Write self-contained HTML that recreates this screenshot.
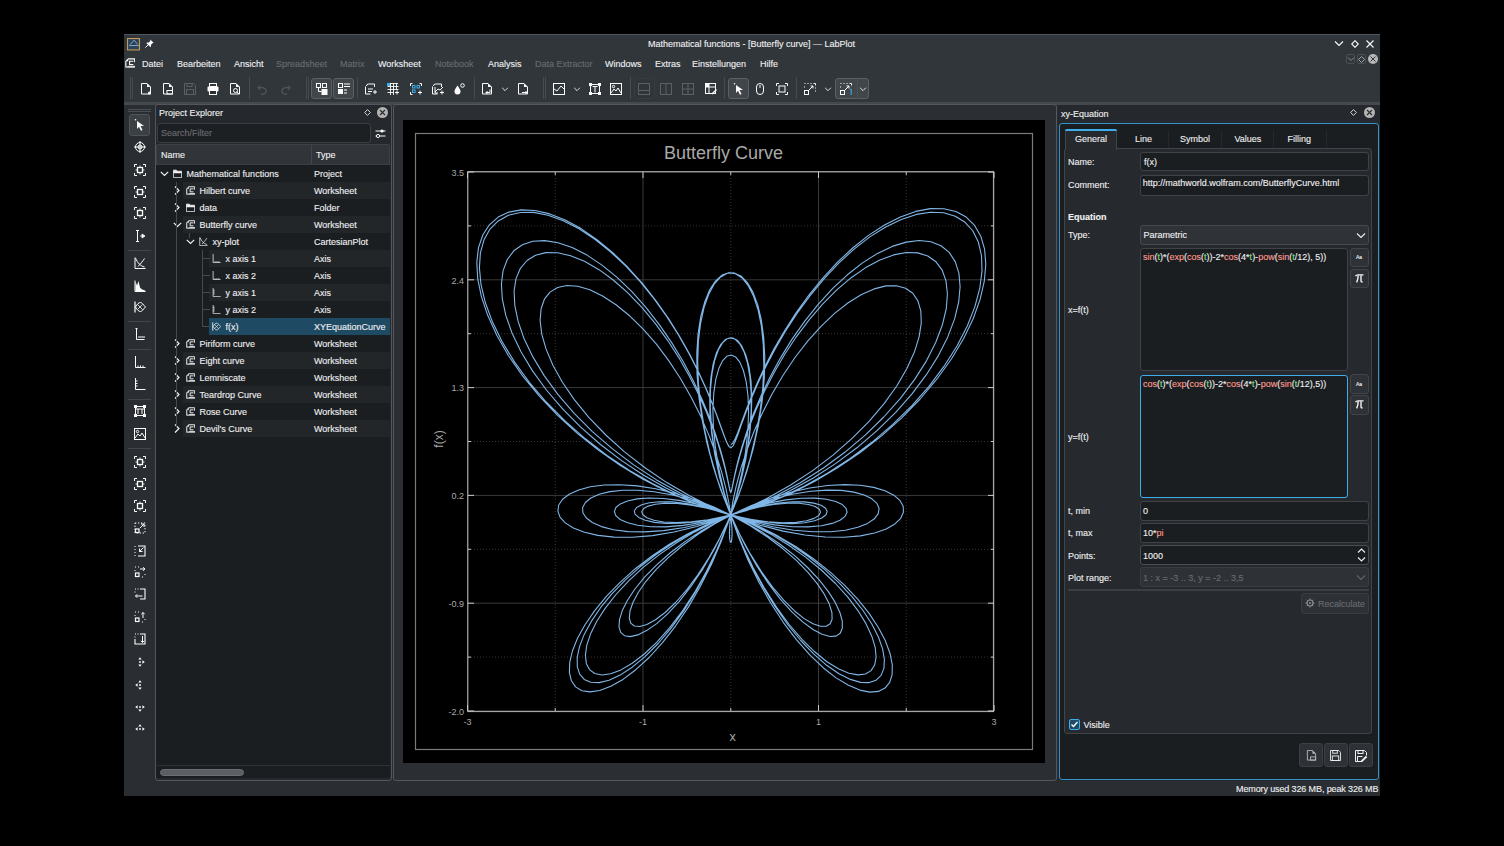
<!DOCTYPE html>
<html><head><meta charset="utf-8">
<style>
*{box-sizing:border-box;margin:0;padding:0}
html,body{width:1504px;height:846px;overflow:hidden;background:#000;font-family:"Liberation Sans",sans-serif;color:#eff0f1}
.a{position:absolute}
.t{position:absolute;white-space:nowrap;font-size:9px;line-height:12px;-webkit-text-stroke:0.12px currentColor}
.dis{color:#686c70}
.sep{position:absolute;width:1px;background:#464b50}
.tb{position:absolute;background:#41464b;border:1px solid #5b6065;border-radius:3px}
.row{position:absolute;height:17px;background:#232629}
.fld{position:absolute;background:#1b1e21;border:1px solid #3f4348;border-radius:3px}
.btn{position:absolute;background:#2e3237;border:1px solid #40454a;border-radius:3px}
.lbl{position:absolute;white-space:nowrap;font-size:9px;line-height:12px;left:1068px;-webkit-text-stroke:0.12px currentColor}
.pl{position:absolute;white-space:nowrap;font-size:9px;line-height:12px;color:#a9a9a9}
.fn{color:#ff9a8e}
.tv{color:#7ee07e}
</style></head><body>
<div id="win" class="a" style="left:124px;top:34px;width:1256px;height:762px;background:#2a2e32;border-top:1px solid #505760"></div>
<div class="a" style="left:124px;top:35px;width:1256px;height:67px;background:#31363b"></div>

<!-- TITLE BAR -->
<svg class="a" style="left:127.0px;top:37.5px" width="13" height="13" viewBox="0 0 12 12"><rect x="0.5" y="0.5" width="11" height="10.5" fill="#2c4257" stroke="#c59a5a"/><path d="M2 7h9M3 6l3.5-4 3.5 4" fill="none" stroke="#8fb8e6" stroke-width="0.8"/></svg>
<svg class="a" style="left:145.0px;top:39.0px" width="9" height="9" viewBox="0 0 12 12"><path d="M7 0.5l4.5 4.5-1.5 0.5-2 2 0 2.5-1 0.5-5-5 0.5-1h2.5l2-2z" fill="#fcfcfc"/><path d="M0.5 11.5l3.5-3.5" stroke="#fcfcfc" stroke-width="1.3"/></svg>
<div class="t" style="left:648px;top:38px">Mathematical functions - [Butterfly curve] — LabPlot</div>
<svg class="a" style="left:1334px;top:40px" width="10" height="7"><path d="M1 1.5l4 4 4-4" fill="none" stroke="#fcfcfc" stroke-width="1.1"/></svg>
<svg class="a" style="left:1350.5px;top:39.5px" width="8" height="8"><path d="M4 0.7L7.3 4 4 7.3 0.7 4z" fill="none" stroke="#fcfcfc" stroke-width="1.1"/></svg>
<svg class="a" style="left:1366px;top:40px" width="8" height="8"><path d="M0.5 0.5l7 7M7.5 0.5l-7 7" stroke="#fcfcfc" stroke-width="1.1"/></svg>
<div class="a" style="left:1346px;top:54px;width:9px;height:10px;border:1px solid #4a4f54;border-radius:2px"></div>
<svg class="a" style="left:1347px;top:56px" width="8" height="6"><path d="M1 1.5l3 3 3-3" fill="none" stroke="#8a8e92"/></svg>
<div class="a" style="left:1357px;top:54px;width:9px;height:10px;border:1px solid #4a4f54;border-radius:2px"></div>
<svg class="a" style="left:1358px;top:56px" width="7" height="7"><path d="M3.5 0.5l3 3-3 3-3-3z" fill="none" stroke="#a0a4a8"/></svg>
<div class="a" style="left:1368px;top:54px;width:10px;height:10px;border-radius:50%;background:#b8b8b8"></div>
<svg class="a" style="left:1370px;top:56px" width="6" height="6"><path d="M0.5 0.5l5 5M5.5 0.5l-5 5" stroke="#333" stroke-width="1"/></svg>

<!-- MENU BAR -->
<svg class="a" style="left:124.5px;top:58.0px" width="10" height="10" viewBox="0 0 12 12"><path d="M1 3.5V11.5M3.5 1H11.5V5" fill="none" stroke="#fcfcfc" stroke-width="1.3"/><path d="M0.3 3.8L3.8 0.3V3.8z" fill="#fcfcfc"/><path d="M10 3.8H5.5V7.8H10" fill="none" stroke="#fcfcfc" stroke-width="1.3"/><path d="M4 9.3h8v2.5H1.5V10H4z" fill="#fcfcfc" opacity="0.85"/></svg>
<div class="t" style="left:142px;top:58px">Datei</div>
<div class="t" style="left:177px;top:58px">Bearbeiten</div>
<div class="t" style="left:234px;top:58px">Ansicht</div>
<div class="t dis" style="left:276px;top:58px">Spreadsheet</div>
<div class="t dis" style="left:340px;top:58px">Matrix</div>
<div class="t" style="left:378px;top:58px">Worksheet</div>
<div class="t dis" style="left:435px;top:58px">Notebook</div>
<div class="t" style="left:488px;top:58px">Analysis</div>
<div class="t dis" style="left:535px;top:58px">Data Extractor</div>
<div class="t" style="left:605px;top:58px">Windows</div>
<div class="t" style="left:655px;top:58px">Extras</div>
<div class="t" style="left:692px;top:58px">Einstellungen</div>
<div class="t" style="left:760px;top:58px">Hilfe</div>

<!-- MAIN TOOLBAR -->
<div class="sep" style="left:130px;top:77px;height:22px"></div>
<div class="sep" style="left:132px;top:77px;height:22px"></div>
<svg class="a" style="left:140.0px;top:82.5px" width="12" height="12" viewBox="0 0 12 12"><path d="M1.5 0.5h5.5l3.5 3.5v7h-9z" fill="none" stroke="#fcfcfc"/><path d="M7 0.5v3.5h3.5" fill="#fcfcfc" stroke="none"/><circle cx="9.5" cy="10" r="1.6" fill="#fcfcfc"/></svg>
<svg class="a" style="left:162.0px;top:82.5px" width="12" height="12" viewBox="0 0 12 12"><path d="M1.5 0.5h5.5l3.5 3.5v7h-9z" fill="none" stroke="#fcfcfc"/><path d="M7 0.5v3.5h3.5" fill="#fcfcfc"/><rect x="5" y="7.5" width="5.5" height="3.5" fill="none" stroke="#fcfcfc"/></svg>
<svg class="a" style="left:184.0px;top:82.5px" width="12" height="12" viewBox="0 0 12 12"><path d="M0.5 0.5h9l2 2v9h-11z" fill="none" stroke="#5c6065"/><rect x="3" y="0.5" width="5" height="3" fill="none" stroke="#5c6065"/><rect x="2.5" y="6.5" width="7" height="5" fill="none" stroke="#5c6065"/></svg>
<svg class="a" style="left:206.5px;top:82.5px" width="12" height="12" viewBox="0 0 12 12"><rect x="2.5" y="0.5" width="7" height="3" fill="none" stroke="#fcfcfc"/><rect x="0.5" y="3.5" width="11" height="5" rx="1" fill="#fcfcfc"/><rect x="2.5" y="7.5" width="7" height="4" fill="#2a2e32" stroke="#fcfcfc"/></svg>
<svg class="a" style="left:229.0px;top:82.5px" width="12" height="12" viewBox="0 0 12 12"><path d="M1.5 0.5h5.5l3.5 3.5v7h-9z" fill="none" stroke="#fcfcfc"/><path d="M7 0.5v3.5h3.5" fill="#fcfcfc"/><circle cx="6.5" cy="7.5" r="2" fill="none" stroke="#fcfcfc"/><path d="M8 9l2 2" stroke="#fcfcfc"/></svg>
<div class="sep" style="left:249px;top:77px;height:22px"></div>
<svg class="a" style="left:256.5px;top:82.5px" width="12" height="12" viewBox="0 0 12 12"><path d="M3 2.5L0.8 4.8 3 7" fill="none" stroke="#5c6065"/><path d="M1 4.8h5a3.2 3.2 0 0 1 0 6.4H4" fill="none" stroke="#5c6065"/></svg>
<svg class="a" style="left:278.5px;top:82.5px" width="12" height="12" viewBox="0 0 12 12"><path d="M9 2.5l2.2 2.3L9 7" fill="none" stroke="#5c6065"/><path d="M11 4.8H6a3.2 3.2 0 0 0 0 6.4h2" fill="none" stroke="#5c6065"/></svg>
<div class="sep" style="left:306px;top:77px;height:22px"></div>
<div class="sep" style="left:308px;top:77px;height:22px"></div>
<div class="tb" style="left:311px;top:78px;width:21px;height:21px"></div>
<svg class="a" style="left:315.5px;top:82.5px" width="12" height="12" viewBox="0 0 12 12"><rect x="0.5" y="0.5" width="4" height="4" fill="none" stroke="#fcfcfc"/><rect x="6.5" y="0.5" width="4" height="4" fill="none" stroke="#fcfcfc"/><rect x="5.5" y="6" width="6" height="6" fill="#fcfcfc"/><path d="M2.5 4.5v4h3" fill="none" stroke="#fcfcfc"/></svg>
<div class="tb" style="left:333px;top:78px;width:21px;height:21px"></div>
<svg class="a" style="left:337.5px;top:82.5px" width="12" height="12" viewBox="0 0 12 12"><rect x="0.5" y="0.5" width="4" height="4" fill="none" stroke="#fcfcfc"/><rect x="0" y="6" width="5" height="5" fill="#fcfcfc"/><path d="M6 1h6M6 3.5h6M6 7h3M6 10h3" stroke="#fcfcfc"/></svg>
<div class="sep" style="left:357px;top:77px;height:22px"></div>
<svg class="a" style="left:365.0px;top:82.5px" width="12" height="12" viewBox="0 0 12 12"><path d="M1.5 3a2 2 0 0 1 2-2h6v3" fill="none" stroke="#fcfcfc"/><path d="M0.5 3.5v7.5h5" fill="none" stroke="#fcfcfc"/><path d="M3 6h5M3 8.5h4" stroke="#fcfcfc"/><path d="M8 9h4M10 7v4" stroke="#fcfcfc"/></svg>
<svg class="a" style="left:387.3px;top:82.5px" width="12" height="12" viewBox="0 0 12 12"><rect x="0" y="0" width="4" height="3" fill="#3daee9"/><path d="M4 0.5h7M0.5 3.5h11M0.5 6.5h11M0.5 9.5h6M3.5 0v12M6.5 0v12M9.5 0v6" stroke="#fcfcfc" stroke-width="0.9"/><path d="M8 9.5h4M10 7.5v4" stroke="#fcfcfc"/></svg>
<svg class="a" style="left:409.6px;top:82.5px" width="12" height="12" viewBox="0 0 12 12"><path d="M0.5 3V0.5h2M11.5 3V0.5h-2M0.5 9v2.5h2" fill="none" stroke="#fcfcfc"/><rect x="2.5" y="2.5" width="2.5" height="2.5" fill="none" stroke="#3daee9"/><rect x="7" y="2.5" width="2.5" height="2.5" fill="none" stroke="#3daee9"/><rect x="2.5" y="7" width="2.5" height="2.5" fill="none" stroke="#3daee9"/><path d="M8 9.5h4M10 7.5v4" stroke="#fcfcfc"/></svg>
<svg class="a" style="left:431.7px;top:82.5px" width="12" height="12" viewBox="0 0 12 12"><path d="M1.5 3a2 2 0 0 1 2-2h6v3" fill="none" stroke="#fcfcfc"/><path d="M0.5 3.5v7.5h5" fill="none" stroke="#fcfcfc"/><path d="M3 4v6h3M3 9l3-3 2 1 3-3" fill="none" stroke="#fcfcfc"/><path d="M8 9.5h4M10 7.5v4" stroke="#fcfcfc"/></svg>
<svg class="a" style="left:452.7px;top:82.5px" width="12" height="12" viewBox="0 0 12 12"><path d="M4.5 2.5c-2 3-3 4.5-3 6a3 3 0 0 0 6 0c0-1.5-1-3-3-6z" fill="#fcfcfc"/><circle cx="9.5" cy="2.5" r="1.8" fill="none" stroke="#fcfcfc"/></svg>
<div class="sep" style="left:474px;top:77px;height:22px"></div>
<svg class="a" style="left:481.0px;top:82.5px" width="12" height="12" viewBox="0 0 12 12"><path d="M1.5 0.5h5.5l3.5 3.5v7h-9z" fill="none" stroke="#fcfcfc"/><path d="M7 0.5v3.5h3.5" fill="#fcfcfc"/><path d="M9 6.5v3h-4M6.5 8l-1.5 1.5 1.5 1.5" fill="none" stroke="#fcfcfc"/></svg>
<svg class="a" style="left:499.7px;top:83.5px" width="10" height="10" viewBox="0 0 12 12"><path d="M2.5 4.5l3.5 3.5 3.5-3.5" fill="none" stroke="#fcfcfc"/></svg>
<svg class="a" style="left:517.0px;top:82.5px" width="12" height="12" viewBox="0 0 12 12"><path d="M1.5 0.5h5.5l3.5 3.5v7h-9z" fill="none" stroke="#fcfcfc"/><path d="M7 0.5v3.5h3.5" fill="#fcfcfc"/><path d="M5 9.5h5M8.5 8l1.5 1.5-1.5 1.5" fill="none" stroke="#fcfcfc"/></svg>
<div class="sep" style="left:543px;top:77px;height:22px"></div>
<div class="sep" style="left:545px;top:77px;height:22px"></div>
<svg class="a" style="left:553.2px;top:82.5px" width="12" height="12" viewBox="0 0 12 12"><rect x="0.5" y="0.5" width="11" height="11" fill="none" stroke="#fcfcfc"/><path d="M1 6l3 2 4-5 3 3" fill="none" stroke="#fcfcfc"/></svg>
<svg class="a" style="left:571.8px;top:83.5px" width="10" height="10" viewBox="0 0 12 12"><path d="M2.5 4.5l3.5 3.5 3.5-3.5" fill="none" stroke="#fcfcfc"/></svg>
<svg class="a" style="left:588.8px;top:82.5px" width="12" height="12" viewBox="0 0 12 12"><rect x="1.5" y="1.5" width="9" height="9" fill="none" stroke="#fcfcfc"/><rect x="0" y="0" width="3" height="3" fill="#fcfcfc"/><rect x="9" y="0" width="3" height="3" fill="#fcfcfc"/><rect x="0" y="9" width="3" height="3" fill="#fcfcfc"/><rect x="9" y="9" width="3" height="3" fill="#fcfcfc"/><path d="M3.5 3.5h5M6 3.5v6" stroke="#fcfcfc"/></svg>
<svg class="a" style="left:610.4px;top:82.5px" width="12" height="12" viewBox="0 0 12 12"><rect x="0.5" y="0.5" width="11" height="11" fill="none" stroke="#fcfcfc"/><circle cx="3.5" cy="3.5" r="1.2" fill="none" stroke="#fcfcfc"/><path d="M1 10l3-4 2 2 2-3 3 5" fill="none" stroke="#fcfcfc"/></svg>
<div class="sep" style="left:630px;top:77px;height:22px"></div>
<div class="tb" style="left:634px;top:78px;width:21px;height:21px;background:#30353a;border-color:#383d42"></div>
<svg class="a" style="left:638.0px;top:82.5px" width="12" height="12" viewBox="0 0 12 12"><rect x="0.5" y="0.5" width="11" height="11" fill="none" stroke="#5c6065"/><path d="M0.5 7.5h11" stroke="#5c6065"/></svg>
<svg class="a" style="left:659.6px;top:82.5px" width="12" height="12" viewBox="0 0 12 12"><rect x="0.5" y="0.5" width="11" height="11" fill="none" stroke="#5c6065"/><path d="M6 0.5v11" stroke="#5c6065"/></svg>
<svg class="a" style="left:682.3px;top:82.5px" width="12" height="12" viewBox="0 0 12 12"><rect x="0.5" y="0.5" width="11" height="11" fill="none" stroke="#5c6065"/><path d="M6 0.5v11M0.5 6h11" stroke="#5c6065"/></svg>
<svg class="a" style="left:704.5px;top:82.5px" width="12" height="12" viewBox="0 0 12 12"><rect x="0.5" y="0.5" width="10" height="10" fill="none" stroke="#fcfcfc"/><path d="M0.5 4h10M4 0.5v10" stroke="#fcfcfc"/><rect x="0.5" y="0.5" width="3.5" height="3.5" fill="#fcfcfc"/><path d="M7 11l4.5-4.5" stroke="#fcfcfc" stroke-width="1.5"/></svg>
<div class="sep" style="left:724px;top:77px;height:22px"></div>
<div class="tb" style="left:728px;top:78px;width:21px;height:21px"></div>
<svg class="a" style="left:732.5px;top:82.5px" width="12" height="12" viewBox="0 0 12 12"><path d="M3 2l7 5h-3.5l2 4-1.5 0.8-2-4L3 10z" fill="#fcfcfc"/><circle cx="1.5" cy="0.8" r="0.8" fill="#fcfcfc"/></svg>
<svg class="a" style="left:754.3px;top:82.5px" width="12" height="12" viewBox="0 0 12 12"><rect x="2.5" y="0.5" width="7" height="11" rx="3.5" fill="none" stroke="#fcfcfc"/><path d="M6 2v3" stroke="#fcfcfc"/></svg>
<svg class="a" style="left:776.4px;top:82.5px" width="12" height="12" viewBox="0 0 12 12"><path d="M0.5 3V0.5H3M9 0.5h2.5V3M11.5 9v2.5H9M3 11.5H0.5V9" fill="none" stroke="#fcfcfc"/><rect x="3" y="3" width="6" height="6" fill="none" stroke="#fcfcfc"/></svg>
<div class="sep" style="left:796px;top:77px;height:22px"></div>
<svg class="a" style="left:803.8px;top:82.5px" width="12" height="12" viewBox="0 0 12 12"><path d="M3.5 0.5h1M6.5 0.5h1M9.5 0.5h2v2M11.5 4.5v1M11.5 7.5v1M0.5 3.5v1M0.5 0.5h1" stroke="#fcfcfc"/><rect x="0.5" y="7.5" width="4" height="4" fill="none" stroke="#fcfcfc"/><path d="M5 7l4-4M6.5 3H9v2.5" fill="none" stroke="#fcfcfc"/></svg>
<svg class="a" style="left:822.6px;top:83.5px" width="10" height="10" viewBox="0 0 12 12"><path d="M2.5 4.5l3.5 3.5 3.5-3.5" fill="none" stroke="#fcfcfc"/></svg>
<div class="tb" style="left:835px;top:78px;width:34px;height:21px"></div>
<div class="sep" style="left:857px;top:78px;height:21px;background:#4a5056"></div>
<svg class="a" style="left:839.5px;top:82.5px" width="12" height="12" viewBox="0 0 12 12"><path d="M3.5 0.5h1M6.5 0.5h1M9.5 0.5h2v2M0.5 3.5v1M0.5 0.5h1" stroke="#fcfcfc"/><rect x="0.5" y="7.5" width="4" height="4" fill="none" stroke="#fcfcfc"/><path d="M5 7l4-4M6.5 3H9v2.5" fill="none" stroke="#fcfcfc"/><path d="M10 7l1.2-1v6" fill="none" stroke="#3daee9"/></svg>
<svg class="a" style="left:858.2px;top:83.5px" width="10" height="10" viewBox="0 0 12 12"><path d="M2.5 4.5l3.5 3.5 3.5-3.5" fill="none" stroke="#fcfcfc"/></svg>
<div class="a" style="left:124px;top:102px;width:1256px;height:3px;background:#45494e"></div>

<!-- LEFT TOOLBAR -->
<div class="a" style="left:124px;top:105px;width:31px;height:676px;background:#2a2e32"></div>
<div class="a" style="left:128px;top:109px;width:23px;height:1px;background:#4a4f54"></div>
<div class="a" style="left:128px;top:111px;width:23px;height:1px;background:#4a4f54"></div>
<div class="tb" style="left:129px;top:114px;width:21px;height:22px;background:#3b4045;border-color:#4f545a"></div>
<svg class="a" style="left:133.6px;top:119.3px" width="12" height="12" viewBox="0 0 12 12"><path d="M3 2l7 5h-3.5l2 4-1.5 0.8-2-4L3 10z" fill="#fcfcfc"/><circle cx="1.5" cy="0.8" r="0.8" fill="#fcfcfc"/></svg>
<svg class="a" style="left:133.6px;top:141.4px" width="12" height="12" viewBox="0 0 12 12"><circle cx="6" cy="6" r="4.5" fill="none" stroke="#fcfcfc"/><circle cx="6" cy="6" r="2" fill="none" stroke="#fcfcfc"/><path d="M6 0v12M0 6h12" stroke="#fcfcfc"/></svg>
<svg class="a" style="left:133.5px;top:163.5px" width="12" height="12" viewBox="0 0 12 12"><path d="M0.5 3V0.5H3M9 0.5H11.5V3M11.5 9V11.5H9M3 11.5H0.5V9" fill="none" stroke="#fcfcfc"/><rect x="3.5" y="3.5" width="5" height="5" fill="none" stroke="#fcfcfc" stroke-width="1.3"/><path d="M5 2.6L6 1.3 7 2.6z" fill="#fcfcfc"/><path d="M5 9.4L6 10.7 7 9.4z" fill="#fcfcfc"/><path d="M2.6 5L1.3 6 2.6 7z" fill="#fcfcfc"/><path d="M9.4 5L10.7 6 9.4 7z" fill="#fcfcfc"/></svg>
<svg class="a" style="left:133.5px;top:185.7px" width="12" height="12" viewBox="0 0 12 12"><path d="M0.5 3V0.5H3M9 0.5H11.5V3M11.5 9V11.5H9M3 11.5H0.5V9" fill="none" stroke="#fcfcfc"/><rect x="3.5" y="3.5" width="5" height="5" fill="none" stroke="#fcfcfc" stroke-width="1.3"/><path d="M2.6 5L1.3 6 2.6 7z" fill="#fcfcfc"/><path d="M9.4 5L10.7 6 9.4 7z" fill="#fcfcfc"/></svg>
<svg class="a" style="left:133.5px;top:207.4px" width="12" height="12" viewBox="0 0 12 12"><path d="M0.5 3V0.5H3M9 0.5H11.5V3M11.5 9V11.5H9M3 11.5H0.5V9" fill="none" stroke="#fcfcfc"/><rect x="3.5" y="3.5" width="5" height="5" fill="none" stroke="#fcfcfc" stroke-width="1.3"/><path d="M5 2.6L6 1.3 7 2.6z" fill="#fcfcfc"/><path d="M5 9.4L6 10.7 7 9.4z" fill="#fcfcfc"/></svg>
<svg class="a" style="left:133.6px;top:229.9px" width="12" height="12" viewBox="0 0 12 12"><path d="M2 0.5h3M3.5 0.5v11M2 11.5h3" stroke="#fcfcfc"/><path d="M6 6h3M8 4l3 2-3 2z" fill="#fcfcfc" stroke="#fcfcfc" stroke-width="0.8"/></svg>
<svg class="a" style="left:133.6px;top:256.9px" width="12" height="12" viewBox="0 0 12 12"><path d="M1 0.5v11h10.5" fill="none" stroke="#fcfcfc"/><path d="M1.5 1c2 5 5 8 9 9" fill="none" stroke="#fcfcfc"/><path d="M4 9.5c2-2 4.5-5 6.5-8" fill="none" stroke="#fcfcfc"/></svg>
<svg class="a" style="left:133.6px;top:279.5px" width="12" height="12" viewBox="0 0 12 12"><path d="M1 0.5v11h10.5" fill="none" stroke="#fcfcfc"/><path d="M1.5 11V1.5l1.5 4 1.5-4.5 1.5 6.5 2 2 2 0.5 1.5 1z" fill="#fcfcfc"/></svg>
<svg class="a" style="left:133.6px;top:301.0px" width="12" height="12" viewBox="0 0 12 12"><path d="M1 0.5v11" stroke="#fcfcfc" stroke-width="1.2"/><path d="M1.5 6C3 3 5 1.5 6.5 1.5S9.5 4 11.5 6C9.5 8 8 10.5 6.5 10.5S3 9 1.5 6z" fill="none" stroke="#fcfcfc"/><path d="M3.5 3.5l5 5M3.5 8.5l5-5" stroke="#fcfcfc" stroke-width="0.8"/></svg>
<svg class="a" style="left:133.6px;top:328.0px" width="12" height="12" viewBox="0 0 12 12"><path d="M1.5 0.5h2M2.5 0.5v11h8" fill="none" stroke="#fcfcfc"/><path d="M4 9h7" stroke="#fcfcfc"/></svg>
<svg class="a" style="left:133.6px;top:356.2px" width="12" height="12" viewBox="0 0 12 12"><path d="M1.5 0v11.5h10" fill="none" stroke="#fcfcfc"/><path d="M4 9.5v2M6.5 9.5v2M9 9.5v2" stroke="#fcfcfc"/></svg>
<svg class="a" style="left:133.6px;top:378.0px" width="12" height="12" viewBox="0 0 12 12"><path d="M1.5 0v11.5h10" fill="none" stroke="#fcfcfc"/><path d="M1.5 3h2M1.5 5.5h2M1.5 8h2" stroke="#fcfcfc"/></svg>
<svg class="a" style="left:133.6px;top:405.4px" width="12" height="12" viewBox="0 0 12 12"><rect x="1.5" y="1.5" width="9" height="9" fill="none" stroke="#fcfcfc"/><rect x="0" y="0" width="3" height="3" fill="#fcfcfc"/><rect x="9" y="0" width="3" height="3" fill="#fcfcfc"/><rect x="0" y="9" width="3" height="3" fill="#fcfcfc"/><rect x="9" y="9" width="3" height="3" fill="#fcfcfc"/><path d="M4 4v5M8 4v5M1.5 4h9" stroke="#fcfcfc"/></svg>
<svg class="a" style="left:133.6px;top:427.8px" width="12" height="12" viewBox="0 0 12 12"><rect x="0.5" y="0.5" width="11" height="11" fill="none" stroke="#fcfcfc"/><circle cx="3.5" cy="3.5" r="1.2" fill="none" stroke="#fcfcfc"/><path d="M1 10l3-4 2 2 2-3 3 5" fill="none" stroke="#fcfcfc"/></svg>
<svg class="a" style="left:133.5px;top:456.0px" width="12" height="12" viewBox="0 0 12 12"><path d="M0.5 3V0.5H3M9 0.5H11.5V3M11.5 9V11.5H9M3 11.5H0.5V9" fill="none" stroke="#fcfcfc"/><rect x="3.5" y="3.5" width="5" height="5" fill="none" stroke="#fcfcfc" stroke-width="1.3"/><path d="M5 2.6L6 1.3 7 2.6z" fill="#fcfcfc"/><path d="M5 9.4L6 10.7 7 9.4z" fill="#fcfcfc"/><path d="M2.6 5L1.3 6 2.6 7z" fill="#fcfcfc"/><path d="M9.4 5L10.7 6 9.4 7z" fill="#fcfcfc"/></svg>
<svg class="a" style="left:133.5px;top:478.0px" width="12" height="12" viewBox="0 0 12 12"><path d="M0.5 3V0.5H3M9 0.5H11.5V3M11.5 9V11.5H9M3 11.5H0.5V9" fill="none" stroke="#fcfcfc"/><rect x="3.5" y="3.5" width="5" height="5" fill="none" stroke="#fcfcfc" stroke-width="1.3"/><path d="M2.6 5L1.3 6 2.6 7z" fill="#fcfcfc"/><path d="M9.4 5L10.7 6 9.4 7z" fill="#fcfcfc"/></svg>
<svg class="a" style="left:133.5px;top:500.0px" width="12" height="12" viewBox="0 0 12 12"><path d="M0.5 3V0.5H3M9 0.5H11.5V3M11.5 9V11.5H9M3 11.5H0.5V9" fill="none" stroke="#fcfcfc"/><rect x="3.5" y="3.5" width="5" height="5" fill="none" stroke="#fcfcfc" stroke-width="1.3"/><path d="M5 2.6L6 1.3 7 2.6z" fill="#fcfcfc"/><path d="M5 9.4L6 10.7 7 9.4z" fill="#fcfcfc"/></svg>
<svg class="a" style="left:133.6px;top:522.0px" width="12" height="12" viewBox="0 0 12 12"><rect x="1" y="1" width="10" height="10" fill="none" stroke="#fcfcfc" stroke-dasharray="1.3 1.7"/><rect x="1.5" y="7" width="3.5" height="3.5" fill="none" stroke="#fcfcfc" stroke-width="1.2"/><path d="M6 6l4-4M7 2h3v3" fill="none" stroke="#fcfcfc"/></svg>
<svg class="a" style="left:133.6px;top:544.5px" width="12" height="12" viewBox="0 0 12 12"><path d="M4 1h7v10H4" fill="none" stroke="#fcfcfc" stroke-width="1.1"/><path d="M1 1v1M1 4v1M1 7v1M1 10v1" stroke="#fcfcfc"/><path d="M9.5 2.5l-4 4M5.5 3.5v3h3" fill="none" stroke="#fcfcfc"/></svg>
<svg class="a" style="left:133.6px;top:566.4px" width="12" height="12" viewBox="0 0 12 12"><path d="M1 1h1M4 1h1M1 4v1M11 8v1M8 11h1M11 11v0" stroke="#fcfcfc"/><rect x="1.5" y="7" width="3.5" height="3.5" fill="none" stroke="#fcfcfc" stroke-width="1.2"/><path d="M6 3h5M9 1.3L11 3 9 4.7" fill="none" stroke="#fcfcfc"/></svg>
<svg class="a" style="left:133.6px;top:588.4px" width="12" height="12" viewBox="0 0 12 12"><path d="M6 1h5v10H6" fill="none" stroke="#fcfcfc" stroke-width="1.1"/><path d="M1 1h1M3.5 1h1M1 3.5v1M1 6v0M3.5 3.5h0" stroke="#fcfcfc"/><path d="M8.5 8H1.5M3.2 6.3L1.5 8l1.7 1.7" fill="none" stroke="#fcfcfc"/></svg>
<svg class="a" style="left:133.6px;top:610.7px" width="12" height="12" viewBox="0 0 12 12"><path d="M1 1h1M4 1h1M1 4v1M11 8v1M8 11h1" stroke="#fcfcfc"/><rect x="1.5" y="7" width="3.5" height="3.5" fill="none" stroke="#fcfcfc" stroke-width="1.2"/><path d="M9 7V1.5M7.3 3.2L9 1.5l1.7 1.7" fill="none" stroke="#fcfcfc"/></svg>
<svg class="a" style="left:133.6px;top:633.0px" width="12" height="12" viewBox="0 0 12 12"><path d="M1 6v5h10V1H6" fill="none" stroke="#fcfcfc" stroke-width="1.1"/><path d="M1 1h1M3.5 1h1M1 3.5v1" stroke="#fcfcfc"/><path d="M8.5 3v6.5M6.8 7.8l1.7 1.7 1.7-1.7" fill="none" stroke="#fcfcfc"/></svg>
<svg class="a" style="left:133.5px;top:656.2px" width="12" height="12" viewBox="0 0 12 12"><circle cx="6" cy="6" r="0.9" fill="#fcfcfc"/><path d="M4.3 3.6L6 1.2 7.7 3.6zM4.3 8.4L6 10.8 7.7 8.4zM8.4 4.3L10.8 6 8.4 7.7z" fill="#fcfcfc"/></svg>
<svg class="a" style="left:133.5px;top:678.5px" width="12" height="12" viewBox="0 0 12 12"><circle cx="6" cy="6" r="0.9" fill="#fcfcfc"/><path d="M4.3 3.6L6 1.2 7.7 3.6zM4.3 8.4L6 10.8 7.7 8.4zM3.6 4.3L1.2 6 3.6 7.7z" fill="#fcfcfc"/></svg>
<svg class="a" style="left:133.5px;top:700.8px" width="12" height="12" viewBox="0 0 12 12"><circle cx="6" cy="6" r="0.9" fill="#fcfcfc"/><path d="M4.3 8.4L6 10.8 7.7 8.4zM8.4 4.3L10.8 6 8.4 7.7zM3.6 4.3L1.2 6 3.6 7.7z" fill="#fcfcfc"/></svg>
<svg class="a" style="left:133.5px;top:722.6px" width="12" height="12" viewBox="0 0 12 12"><circle cx="6" cy="6" r="0.9" fill="#fcfcfc"/><path d="M4.3 3.6L6 1.2 7.7 3.6zM8.4 4.3L10.8 6 8.4 7.7zM3.6 4.3L1.2 6 3.6 7.7z" fill="#fcfcfc"/></svg>
<div class="a" style="left:128px;top:250px;width:23px;height:1px;background:#41464b"></div>
<div class="a" style="left:128px;top:321px;width:23px;height:1px;background:#41464b"></div>
<div class="a" style="left:128px;top:349px;width:23px;height:1px;background:#41464b"></div>
<div class="a" style="left:128px;top:399px;width:23px;height:1px;background:#41464b"></div>
<div class="a" style="left:128px;top:448px;width:23px;height:1px;background:#41464b"></div>

<!-- PROJECT EXPLORER -->
<div class="a" style="left:155px;top:104px;width:237px;height:677px;background:#25292d;border:1px solid #53575c;border-radius:3px"></div>
<div class="t" style="left:159px;top:107px">Project Explorer</div>
<svg class="a" style="left:363.5px;top:108.8px" width="7" height="7"><path d="M3.5 0.6L6.4 3.5 3.5 6.4 0.6 3.5z" fill="none" stroke="#e8e8e8" stroke-width="0.9"/></svg>
<div class="a" style="left:377px;top:107px;width:11px;height:11px;border-radius:50%;background:#b3b3b3"></div>
<svg class="a" style="left:379px;top:109px" width="7" height="7"><path d="M1 1l5 5M6 1L1 6" stroke="#2a2a2a" stroke-width="1.1"/></svg>
<div class="fld" style="left:157px;top:123px;width:214px;height:20px;background:#1d2023;border-color:#3a3e43"></div>
<div class="t dis" style="left:161px;top:127px">Search/Filter</div>
<svg class="a" style="left:375px;top:128px" width="11" height="11"><path d="M0.5 3h10M0.5 8h10" stroke="#fcfcfc"/><circle cx="7" cy="3" r="1.6" fill="#fcfcfc"/><circle cx="3" cy="8" r="1.6" fill="#25292d" stroke="#fcfcfc"/></svg>
<div class="a" style="left:156px;top:144px;width:234px;height:634px;background:#1b1e20;border-radius:2px"></div>
<div class="a" style="left:156px;top:144px;width:234px;height:21px;background:#313539;border:1px solid #3e4247;border-bottom-color:#3a3e43;border-radius:2px 2px 0 0"></div>
<div class="a" style="left:311px;top:145px;width:1px;height:19px;background:#43474c"></div>
<div class="t" style="left:161px;top:149px">Name</div>
<div class="t" style="left:316px;top:149px">Type</div>
<svg class="a" style="left:159.5px;top:171.0px" width="9" height="6"><path d="M0.8 0.8l3.7 3.7 3.7-3.7" fill="none" stroke="#f4f4f4" stroke-width="1.15"/></svg>
<svg class="a" style="left:173.0px;top:169.0px" width="9" height="9" viewBox="0 0 12 12"><path d="M0.5 1.5h4l1.5 1.5h5.5v8.5h-11z" fill="none" stroke="#f0f0f0" stroke-width="1.1"/><path d="M0.5 1.5h4l1.5 1.5h5.5v2.5h-11z" fill="#f0f0f0"/></svg>
<div class="t" style="left:186.6px;top:168px">Mathematical functions</div>
<div class="t" style="left:314px;top:168px">Project</div>
<div class="row" style="left:183.0px;top:182px;width:207.0px"></div>
<svg class="a" style="left:174.0px;top:186.0px" width="6" height="9"><path d="M1 0.5l4 4-4 4" fill="none" stroke="#f4f4f4" stroke-width="1.15"/></svg>
<svg class="a" style="left:186.0px;top:186.0px" width="9" height="9" viewBox="0 0 12 12"><path d="M1 3.5V11.5M3.5 1H11.5V5" fill="none" stroke="#f0f0f0" stroke-width="1.3"/><path d="M0.3 3.8L3.8 0.3V3.8z" fill="#f0f0f0"/><path d="M10 3.8H5.5V7.8H10" fill="none" stroke="#f0f0f0" stroke-width="1.3"/><path d="M4 9.3h8v2.5H1.5V10H4z" fill="#f0f0f0" opacity="0.85"/></svg>
<div class="t" style="left:199.6px;top:185px">Hilbert curve</div>
<div class="t" style="left:314px;top:185px">Worksheet</div>
<svg class="a" style="left:174.0px;top:203.0px" width="6" height="9"><path d="M1 0.5l4 4-4 4" fill="none" stroke="#f4f4f4" stroke-width="1.15"/></svg>
<svg class="a" style="left:186.0px;top:203.0px" width="9" height="9" viewBox="0 0 12 12"><path d="M0.5 1.5h4l1.5 1.5h5.5v8.5h-11z" fill="none" stroke="#f0f0f0" stroke-width="1.1"/><path d="M0.5 1.5h4l1.5 1.5h5.5v2.5h-11z" fill="#f0f0f0"/></svg>
<div class="t" style="left:199.6px;top:202px">data</div>
<div class="t" style="left:314px;top:202px">Folder</div>
<div class="row" style="left:183.0px;top:216px;width:207.0px"></div>
<svg class="a" style="left:172.5px;top:222.0px" width="9" height="6"><path d="M0.8 0.8l3.7 3.7 3.7-3.7" fill="none" stroke="#f4f4f4" stroke-width="1.15"/></svg>
<svg class="a" style="left:186.0px;top:220.0px" width="9" height="9" viewBox="0 0 12 12"><path d="M1 3.5V11.5M3.5 1H11.5V5" fill="none" stroke="#f0f0f0" stroke-width="1.3"/><path d="M0.3 3.8L3.8 0.3V3.8z" fill="#f0f0f0"/><path d="M10 3.8H5.5V7.8H10" fill="none" stroke="#f0f0f0" stroke-width="1.3"/><path d="M4 9.3h8v2.5H1.5V10H4z" fill="#f0f0f0" opacity="0.85"/></svg>
<div class="t" style="left:199.6px;top:219px">Butterfly curve</div>
<div class="t" style="left:314px;top:219px">Worksheet</div>
<svg class="a" style="left:185.5px;top:239.0px" width="9" height="6"><path d="M0.8 0.8l3.7 3.7 3.7-3.7" fill="none" stroke="#f4f4f4" stroke-width="1.15"/></svg>
<svg class="a" style="left:199.0px;top:237.0px" width="9" height="9" viewBox="0 0 12 12"><path d="M1 0.5v11h10.5" fill="none" stroke="#f0f0f0"/><path d="M1.5 1c2 5 5 8 9 9" fill="none" stroke="#f0f0f0"/><path d="M4 9.5c2-2 4.5-5 6.5-8" fill="none" stroke="#f0f0f0"/></svg>
<div class="t" style="left:212.6px;top:236px">xy-plot</div>
<div class="t" style="left:314px;top:236px">CartesianPlot</div>
<div class="row" style="left:209.0px;top:250px;width:181.0px"></div>
<svg class="a" style="left:212.0px;top:254.0px" width="9" height="9" viewBox="0 0 12 12"><path d="M1.5 0v11.5h10" fill="none" stroke="#f0f0f0"/><path d="M4 9.5v2M6.5 9.5v2M9 9.5v2" stroke="#f0f0f0"/></svg>
<div class="t" style="left:225.6px;top:253px">x axis 1</div>
<div class="t" style="left:314px;top:253px">Axis</div>
<svg class="a" style="left:212.0px;top:271.0px" width="9" height="9" viewBox="0 0 12 12"><path d="M1.5 0v11.5h10" fill="none" stroke="#f0f0f0"/><path d="M4 9.5v2M6.5 9.5v2M9 9.5v2" stroke="#f0f0f0"/></svg>
<div class="t" style="left:225.6px;top:270px">x axis 2</div>
<div class="t" style="left:314px;top:270px">Axis</div>
<div class="row" style="left:209.0px;top:284px;width:181.0px"></div>
<svg class="a" style="left:212.0px;top:288.0px" width="9" height="9" viewBox="0 0 12 12"><path d="M1.5 0v11.5h10" fill="none" stroke="#f0f0f0"/><path d="M1.5 3h2M1.5 5.5h2M1.5 8h2" stroke="#f0f0f0"/></svg>
<div class="t" style="left:225.6px;top:287px">y axis 1</div>
<div class="t" style="left:314px;top:287px">Axis</div>
<svg class="a" style="left:212.0px;top:305.0px" width="9" height="9" viewBox="0 0 12 12"><path d="M1.5 0v11.5h10" fill="none" stroke="#f0f0f0"/><path d="M1.5 3h2M1.5 5.5h2M1.5 8h2" stroke="#f0f0f0"/></svg>
<div class="t" style="left:225.6px;top:304px">y axis 2</div>
<div class="t" style="left:314px;top:304px">Axis</div>
<div class="row" style="left:209.0px;top:318px;width:181.0px;background:#1f4a63"></div>
<svg class="a" style="left:212.0px;top:322.0px" width="9" height="9" viewBox="0 0 12 12"><path d="M1 0.5v11" stroke="#f0f0f0" stroke-width="1.2"/><path d="M1.5 6C3 3 5 1.5 6.5 1.5S9.5 4 11.5 6C9.5 8 8 10.5 6.5 10.5S3 9 1.5 6z" fill="none" stroke="#f0f0f0"/><path d="M3.5 3.5l5 5M3.5 8.5l5-5" stroke="#f0f0f0" stroke-width="0.8"/></svg>
<div class="t" style="left:225.6px;top:321px">f(x)</div>
<div class="t" style="left:314px;top:321px">XYEquationCurve</div>
<svg class="a" style="left:174.0px;top:339.0px" width="6" height="9"><path d="M1 0.5l4 4-4 4" fill="none" stroke="#f4f4f4" stroke-width="1.15"/></svg>
<svg class="a" style="left:186.0px;top:339.0px" width="9" height="9" viewBox="0 0 12 12"><path d="M1 3.5V11.5M3.5 1H11.5V5" fill="none" stroke="#f0f0f0" stroke-width="1.3"/><path d="M0.3 3.8L3.8 0.3V3.8z" fill="#f0f0f0"/><path d="M10 3.8H5.5V7.8H10" fill="none" stroke="#f0f0f0" stroke-width="1.3"/><path d="M4 9.3h8v2.5H1.5V10H4z" fill="#f0f0f0" opacity="0.85"/></svg>
<div class="t" style="left:199.6px;top:338px">Piriform curve</div>
<div class="t" style="left:314px;top:338px">Worksheet</div>
<div class="row" style="left:183.0px;top:352px;width:207.0px"></div>
<svg class="a" style="left:174.0px;top:356.0px" width="6" height="9"><path d="M1 0.5l4 4-4 4" fill="none" stroke="#f4f4f4" stroke-width="1.15"/></svg>
<svg class="a" style="left:186.0px;top:356.0px" width="9" height="9" viewBox="0 0 12 12"><path d="M1 3.5V11.5M3.5 1H11.5V5" fill="none" stroke="#f0f0f0" stroke-width="1.3"/><path d="M0.3 3.8L3.8 0.3V3.8z" fill="#f0f0f0"/><path d="M10 3.8H5.5V7.8H10" fill="none" stroke="#f0f0f0" stroke-width="1.3"/><path d="M4 9.3h8v2.5H1.5V10H4z" fill="#f0f0f0" opacity="0.85"/></svg>
<div class="t" style="left:199.6px;top:355px">Eight curve</div>
<div class="t" style="left:314px;top:355px">Worksheet</div>
<svg class="a" style="left:174.0px;top:373.0px" width="6" height="9"><path d="M1 0.5l4 4-4 4" fill="none" stroke="#f4f4f4" stroke-width="1.15"/></svg>
<svg class="a" style="left:186.0px;top:373.0px" width="9" height="9" viewBox="0 0 12 12"><path d="M1 3.5V11.5M3.5 1H11.5V5" fill="none" stroke="#f0f0f0" stroke-width="1.3"/><path d="M0.3 3.8L3.8 0.3V3.8z" fill="#f0f0f0"/><path d="M10 3.8H5.5V7.8H10" fill="none" stroke="#f0f0f0" stroke-width="1.3"/><path d="M4 9.3h8v2.5H1.5V10H4z" fill="#f0f0f0" opacity="0.85"/></svg>
<div class="t" style="left:199.6px;top:372px">Lemniscate</div>
<div class="t" style="left:314px;top:372px">Worksheet</div>
<div class="row" style="left:183.0px;top:386px;width:207.0px"></div>
<svg class="a" style="left:174.0px;top:390.0px" width="6" height="9"><path d="M1 0.5l4 4-4 4" fill="none" stroke="#f4f4f4" stroke-width="1.15"/></svg>
<svg class="a" style="left:186.0px;top:390.0px" width="9" height="9" viewBox="0 0 12 12"><path d="M1 3.5V11.5M3.5 1H11.5V5" fill="none" stroke="#f0f0f0" stroke-width="1.3"/><path d="M0.3 3.8L3.8 0.3V3.8z" fill="#f0f0f0"/><path d="M10 3.8H5.5V7.8H10" fill="none" stroke="#f0f0f0" stroke-width="1.3"/><path d="M4 9.3h8v2.5H1.5V10H4z" fill="#f0f0f0" opacity="0.85"/></svg>
<div class="t" style="left:199.6px;top:389px">Teardrop Curve</div>
<div class="t" style="left:314px;top:389px">Worksheet</div>
<svg class="a" style="left:174.0px;top:407.0px" width="6" height="9"><path d="M1 0.5l4 4-4 4" fill="none" stroke="#f4f4f4" stroke-width="1.15"/></svg>
<svg class="a" style="left:186.0px;top:407.0px" width="9" height="9" viewBox="0 0 12 12"><path d="M1 3.5V11.5M3.5 1H11.5V5" fill="none" stroke="#f0f0f0" stroke-width="1.3"/><path d="M0.3 3.8L3.8 0.3V3.8z" fill="#f0f0f0"/><path d="M10 3.8H5.5V7.8H10" fill="none" stroke="#f0f0f0" stroke-width="1.3"/><path d="M4 9.3h8v2.5H1.5V10H4z" fill="#f0f0f0" opacity="0.85"/></svg>
<div class="t" style="left:199.6px;top:406px">Rose Curve</div>
<div class="t" style="left:314px;top:406px">Worksheet</div>
<div class="row" style="left:183.0px;top:420px;width:207.0px"></div>
<svg class="a" style="left:174.0px;top:424.0px" width="6" height="9"><path d="M1 0.5l4 4-4 4" fill="none" stroke="#f4f4f4" stroke-width="1.15"/></svg>
<svg class="a" style="left:186.0px;top:424.0px" width="9" height="9" viewBox="0 0 12 12"><path d="M1 3.5V11.5M3.5 1H11.5V5" fill="none" stroke="#f0f0f0" stroke-width="1.3"/><path d="M0.3 3.8L3.8 0.3V3.8z" fill="#f0f0f0"/><path d="M10 3.8H5.5V7.8H10" fill="none" stroke="#f0f0f0" stroke-width="1.3"/><path d="M4 9.3h8v2.5H1.5V10H4z" fill="#f0f0f0" opacity="0.85"/></svg>
<div class="t" style="left:199.6px;top:423px">Devil's Curve</div>
<div class="t" style="left:314px;top:423px">Worksheet</div>
<div class="a" style="left:176px;top:182px;width:1px;height:246px;background:#464a4f"></div>
<div class="a" style="left:189px;top:233px;width:1px;height:5px;background:#464a4f"></div>
<div class="a" style="left:202px;top:250px;width:1px;height:76px;background:#464a4f"></div>
<div class="a" style="left:202px;top:258px;width:8px;height:1px;background:#464a4f"></div>
<div class="a" style="left:202px;top:275px;width:8px;height:1px;background:#464a4f"></div>
<div class="a" style="left:202px;top:292px;width:8px;height:1px;background:#464a4f"></div>
<div class="a" style="left:202px;top:309px;width:8px;height:1px;background:#464a4f"></div>
<div class="a" style="left:202px;top:326px;width:8px;height:1px;background:#464a4f"></div>
<div class="a" style="left:157px;top:765px;width:233px;height:1px;background:#2e3236"></div>
<div class="a" style="left:160px;top:769px;width:84px;height:7px;border-radius:4px;background:#5b5f64;border:1px solid #6a6e73"></div>

<!-- CENTRAL -->
<div class="a" style="left:393px;top:104px;width:664px;height:677px;background:#2b2e33;border:1.5px solid #54585d;border-radius:3px"></div>
<div class="a" style="left:403px;top:120px;width:642px;height:643px;background:#000"></div>
<svg class="a" style="left:0;top:0" width="1504" height="846" viewBox="0 0 1504 846">
<rect x="415.5" y="133.5" width="617" height="616" fill="none" stroke="#7a7a7a" stroke-width="1.2"/>
<path d="M467.50 172V711" stroke="#3a3a3a" stroke-width="1"/><path d="M643.00 172V711" stroke="#3a3a3a" stroke-width="1"/><path d="M818.50 172V711" stroke="#3a3a3a" stroke-width="1"/><path d="M994.00 172V711" stroke="#3a3a3a" stroke-width="1"/><path d="M555.25 172V711" stroke="#353535" stroke-width="1" stroke-dasharray="1 2"/><path d="M730.75 172V711" stroke="#353535" stroke-width="1" stroke-dasharray="1 2"/><path d="M906.25 172V711" stroke="#353535" stroke-width="1" stroke-dasharray="1 2"/><path d="M468 172.00H994" stroke="#3a3a3a" stroke-width="1"/><path d="M468 279.80H994" stroke="#3a3a3a" stroke-width="1"/><path d="M468 387.60H994" stroke="#3a3a3a" stroke-width="1"/><path d="M468 495.40H994" stroke="#3a3a3a" stroke-width="1"/><path d="M468 603.20H994" stroke="#3a3a3a" stroke-width="1"/><path d="M468 711.00H994" stroke="#3a3a3a" stroke-width="1"/><path d="M468 225.90H994" stroke="#353535" stroke-width="1" stroke-dasharray="1 2"/><path d="M468 333.70H994" stroke="#353535" stroke-width="1" stroke-dasharray="1 2"/><path d="M468 441.50H994" stroke="#353535" stroke-width="1" stroke-dasharray="1 2"/><path d="M468 549.30H994" stroke="#353535" stroke-width="1" stroke-dasharray="1 2"/><path d="M468 657.10H994" stroke="#353535" stroke-width="1" stroke-dasharray="1 2"/>
<rect x="467.8" y="171.7" width="525.7" height="539.8" fill="none" stroke="#a6a6a6" stroke-width="1.2"/>
<path d="M467.50 711v-6M467.50 172v6" stroke="#c8c8c8" stroke-width="1"/><path d="M643.00 711v-6M643.00 172v6" stroke="#c8c8c8" stroke-width="1"/><path d="M818.50 711v-6M818.50 172v6" stroke="#c8c8c8" stroke-width="1"/><path d="M994.00 711v-6M994.00 172v6" stroke="#c8c8c8" stroke-width="1"/><path d="M555.25 711v-3M555.25 172v3" stroke="#c8c8c8" stroke-width="1"/><path d="M730.75 711v-3M730.75 172v3" stroke="#c8c8c8" stroke-width="1"/><path d="M906.25 711v-3M906.25 172v3" stroke="#c8c8c8" stroke-width="1"/><path d="M468 172.00h6M994 172.00h-6" stroke="#c8c8c8" stroke-width="1"/><path d="M468 279.80h6M994 279.80h-6" stroke="#c8c8c8" stroke-width="1"/><path d="M468 387.60h6M994 387.60h-6" stroke="#c8c8c8" stroke-width="1"/><path d="M468 495.40h6M994 495.40h-6" stroke="#c8c8c8" stroke-width="1"/><path d="M468 603.20h6M994 603.20h-6" stroke="#c8c8c8" stroke-width="1"/><path d="M468 711.00h6M994 711.00h-6" stroke="#c8c8c8" stroke-width="1"/><path d="M468 225.90h3M994 225.90h-3" stroke="#c8c8c8" stroke-width="1"/><path d="M468 333.70h3M994 333.70h-3" stroke="#c8c8c8" stroke-width="1"/><path d="M468 441.50h3M994 441.50h-3" stroke="#c8c8c8" stroke-width="1"/><path d="M468 549.30h3M994 549.30h-3" stroke="#c8c8c8" stroke-width="1"/><path d="M468 657.10h3M994 657.10h-3" stroke="#c8c8c8" stroke-width="1"/>
<path d="M730.8 444.6 L732.8 443.2 L735.0 439.1 L737.8 432.4 L741.2 423.1 L745.4 411.7 L750.7 398.2 L757.2 383.0 L764.9 366.5 L773.9 349.1 L784.3 331.2 L795.9 313.1 L808.7 295.3 L822.6 278.3 L837.3 262.4 L852.7 248.0 L868.5 235.4 L884.5 225.0 L900.4 216.9 L915.7 211.4 L930.3 208.6 L943.8 208.7 L955.9 211.5 L966.2 217.1 L974.6 225.4 L980.8 236.2 L984.6 249.2 L985.8 264.3 L984.3 281.2 L980.1 299.4 L973.2 318.7 L963.5 338.7 L951.4 359.0 L936.8 379.2 L920.1 399.0 L901.5 418.1 L881.3 436.1 L859.9 452.8 L837.5 467.9 L814.8 481.3 L791.9 492.9 L769.5 502.5 L747.8 510.1 L727.2 515.9 L708.2 519.8 L691.1 521.9 L676.2 522.6 L663.7 522.0 L653.9 520.3 L646.9 517.8 L642.9 514.8 L641.7 511.7 L643.5 508.7 L648.1 506.1 L655.4 504.2 L665.2 503.3 L677.3 503.5 L691.3 505.1 L706.9 508.1 L723.8 512.7 L741.5 518.9 L759.8 526.7 L778.1 536.1 L796.1 546.8 L813.4 558.7 L829.7 571.6 L844.7 585.3 L857.9 599.4 L869.3 613.6 L878.5 627.7 L885.5 641.1 L890.1 653.7 L892.3 664.9 L892.1 674.6 L889.7 682.4 L885.0 688.1 L878.3 691.4 L869.8 692.1 L859.8 690.1 L848.5 685.3 L836.1 677.9 L823.1 667.7 L809.8 654.9 L796.4 639.7 L783.2 622.3 L770.7 603.0 L758.9 582.2 L748.1 560.2 L738.6 537.4 L730.5 514.3 L723.9 491.3 L718.9 468.8 L715.4 447.3 L713.4 427.2 L712.9 409.0 L713.8 392.9 L715.8 379.4 L718.8 368.6 L722.5 360.9 L726.7 356.3 L731.2 355.0 L735.6 356.9 L739.8 362.1 L743.4 370.5 L746.2 381.8 L748.0 395.9 L748.6 412.4 L747.8 431.0 L745.6 451.4 L741.8 473.1 L736.4 495.8 L729.5 518.8 L721.1 541.9 L711.4 564.6 L700.4 586.3 L688.5 606.9 L675.7 625.8 L662.5 642.7 L649.1 657.5 L635.8 669.7 L623.0 679.4 L610.8 686.3 L599.7 690.5 L590.0 691.9 L581.9 690.7 L575.6 686.9 L571.4 680.8 L569.4 672.6 L569.7 662.6 L572.4 651.0 L577.5 638.3 L585.0 624.7 L594.7 610.6 L606.4 596.3 L620.1 582.3 L635.3 568.7 L651.9 556.0 L669.4 544.3 L687.5 533.9 L705.9 524.9 L724.1 517.4 L741.7 511.5 L758.4 507.2 L773.7 504.5 L787.4 503.2 L799.0 503.3 L808.4 504.5 L815.2 506.5 L819.3 509.2 L820.5 512.3 L818.8 515.5 L814.1 518.4 L806.6 520.7 L796.3 522.3 L783.3 522.7 L767.9 521.8 L750.5 519.3 L731.1 515.1 L710.4 509.0 L688.5 501.0 L665.9 491.1 L643.1 479.2 L620.4 465.5 L598.3 450.1 L577.0 433.1 L557.1 414.9 L538.9 395.7 L522.6 375.9 L508.5 355.7 L496.9 335.5 L487.8 315.6 L481.4 296.6 L477.7 278.7 L476.8 262.2 L478.5 247.6 L482.8 235.0 L489.4 224.8 L498.2 217.1 L508.9 212.1 L521.3 209.9 L535.0 210.5 L549.8 213.9 L565.2 220.0 L581.1 228.6 L597.0 239.6 L612.8 252.7 L628.0 267.5 L642.6 283.7 L656.2 301.0 L668.7 318.9 L680.0 337.1 L690.1 355.1 L698.8 372.4 L706.2 388.7 L712.4 403.7 L717.4 416.8 L721.4 428.0 L724.6 436.8 L727.1 443.1 L729.2 446.7 L731.1 447.6 L733.1 445.8 L735.3 441.2 L738.1 434.0 L741.5 424.4 L745.9 412.5 L751.3 398.7 L757.9 383.3 L765.8 366.7 L775.0 349.2 L785.4 331.2 L797.2 313.2 L810.1 295.6 L824.0 278.8 L838.7 263.1 L854.1 249.1 L869.8 236.9 L885.7 227.0 L901.3 219.4 L916.4 214.4 L930.6 212.2 L943.7 212.8 L955.3 216.2 L965.1 222.3 L972.9 231.0 L978.4 242.3 L981.5 255.7 L982.0 271.1 L979.8 288.2 L974.9 306.6 L967.3 326.0 L957.0 346.0 L944.1 366.2 L929.0 386.3 L911.7 405.9 L892.5 424.6 L871.9 442.3 L850.1 458.5 L827.4 473.2 L804.5 486.1 L781.5 497.1 L759.0 506.1 L737.3 513.2 L716.9 518.3 L698.1 521.7 L681.3 523.3 L666.7 523.5 L654.6 522.4 L645.2 520.3 L638.7 517.4 L635.0 514.2 L634.4 510.8 L636.6 507.5 L641.7 504.8 L649.4 502.8 L659.6 501.8 L671.9 501.9 L686.2 503.5 L702.0 506.5 L719.1 511.1 L736.9 517.3 L755.1 525.1 L773.4 534.3 L791.3 544.9 L808.5 556.7 L824.5 569.4 L839.1 582.9 L852.0 596.6 L863.0 610.5 L871.8 624.0 L878.4 637.0 L882.6 648.9 L884.4 659.5 L883.9 668.4 L881.1 675.4 L876.1 680.2 L869.2 682.6 L860.6 682.4 L850.4 679.4 L839.0 673.8 L826.7 665.3 L813.9 654.2 L800.7 640.5 L787.6 624.5 L774.8 606.3 L762.6 586.3 L751.3 564.9 L741.1 542.3 L732.2 519.1 L724.7 495.6 L718.7 472.3 L714.3 449.6 L711.5 428.1 L710.3 408.0 L710.4 389.9 L712.0 374.0 L714.6 360.7 L718.2 350.3 L722.5 342.9 L727.3 338.7 L732.2 337.8 L737.2 340.2 L741.7 345.9 L745.7 354.7 L748.9 366.4 L751.0 380.9 L751.8 397.7 L751.3 416.6 L749.4 437.2 L745.8 459.1 L740.7 481.8 L734.1 504.9 L726.0 527.9 L716.6 550.5 L706.1 572.1 L694.6 592.4 L682.4 611.0 L669.7 627.7 L656.9 642.1 L644.3 654.0 L632.2 663.3 L620.9 669.9 L610.7 673.8 L601.9 675.0 L594.7 673.5 L589.5 669.6 L586.3 663.4 L585.4 655.2 L586.8 645.2 L590.6 633.8 L596.8 621.3 L605.3 608.1 L616.0 594.5 L628.7 580.8 L643.2 567.4 L659.3 554.6 L676.6 542.7 L694.8 531.9 L713.5 522.4 L732.4 514.4 L751.0 507.9 L768.9 503.1 L785.8 499.9 L801.2 498.3 L814.9 498.1 L826.5 499.3 L835.7 501.5 L842.3 504.6 L846.1 508.3 L847.1 512.3 L845.0 516.4 L840.0 520.2 L832.1 523.4 L821.4 525.7 L808.1 526.9 L792.4 526.7 L774.6 524.9 L755.1 521.4 L734.1 516.0 L712.0 508.7 L689.4 499.4 L666.5 488.2 L643.7 475.2 L621.6 460.6 L600.5 444.5 L580.7 427.2 L562.6 408.9 L546.4 390.0 L532.5 370.9 L521.0 351.8 L512.1 333.2 L505.8 315.4 L502.3 298.8 L501.4 283.8 L503.1 270.6 L507.3 259.5 L513.8 250.8 L522.4 244.7 L532.8 241.2 L544.8 240.6 L558.0 242.7 L572.2 247.6 L587.0 255.1 L602.0 265.1 L617.1 277.4 L631.9 291.7 L646.1 307.6 L659.5 324.9 L672.0 343.1 L683.3 361.8 L693.3 380.7 L702.0 399.2 L709.4 417.0 L715.4 433.7 L720.2 448.8 L723.9 462.1 L726.5 473.3 L728.3 482.0 L729.5 488.2 L730.4 491.6 L731.0 492.3 L731.7 490.1 L732.8 485.2 L734.3 477.7 L736.7 467.7 L739.9 455.5 L744.2 441.4 L749.7 425.6 L756.5 408.7 L764.6 390.9 L774.0 372.7 L784.6 354.5 L796.3 336.8 L809.1 319.8 L822.6 304.1 L836.8 289.9 L851.2 277.7 L865.7 267.6 L879.9 260.0 L893.6 254.9 L906.3 252.5 L917.8 252.9 L927.8 256.0 L936.0 261.8 L942.2 270.2 L946.0 280.9 L947.4 293.8 L946.3 308.5 L942.4 324.8 L935.8 342.2 L926.6 360.6 L914.7 379.4 L900.4 398.3 L883.8 417.0 L865.2 435.1 L844.8 452.3 L823.1 468.2 L800.2 482.7 L776.7 495.5 L753.0 506.4 L729.4 515.5 L706.4 522.5 L684.4 527.5 L663.7 530.6 L644.8 531.9 L627.9 531.6 L613.4 529.7 L601.4 526.6 L592.3 522.5 L586.1 517.8 L582.9 512.7 L582.6 507.5 L585.4 502.5 L590.9 498.0 L599.2 494.3 L609.9 491.6 L622.8 490.2 L637.6 490.2 L653.9 491.7 L671.4 494.7 L689.7 499.4 L708.4 505.6 L727.1 513.3 L745.4 522.4 L763.0 532.6 L779.4 543.7 L794.4 555.4 L807.6 567.5 L819.0 579.6 L828.2 591.4 L835.2 602.4 L839.9 612.5 L842.3 621.2 L842.3 628.2 L840.2 633.2 L836.0 636.1 L829.9 636.5 L822.1 634.3 L813.0 629.5 L802.7 621.9 L791.6 611.6 L780.1 598.8 L768.3 583.4 L756.7 565.8 L745.6 546.2 L735.1 524.9 L725.6 502.2 L717.2 478.6 L710.2 454.4 L704.7 430.1 L700.8 406.2 L698.4 383.1 L697.7 361.2 L698.4 341.0 L700.7 322.8 L704.2 307.0 L708.9 293.9 L714.4 283.8 L720.7 276.9 L727.3 273.2 L734.2 272.9 L740.9 276.0 L747.2 282.4 L752.8 291.9 L757.6 304.4 L761.3 319.7 L763.7 337.3 L764.8 357.0 L764.3 378.4 L762.2 401.0 L758.6 424.4 L753.4 448.2 L746.7 471.9 L738.8 495.1 L729.7 517.4 L719.7 538.3 L709.0 557.6 L697.9 574.8 L686.7 589.9 L675.6 602.5 L665.1 612.5 L655.5 619.8 L646.9 624.5 L639.8 626.5 L634.3 626.0 L630.7 623.1 L629.3 618.0 L630.0 611.0 L633.0 602.3 L638.4 592.3 L646.0 581.3 L656.0 569.7 L668.0 557.8 L682.0 546.0 L697.7 534.5 L714.8 523.7 L733.0 513.9 L752.0 505.2 L771.3 497.9 L790.7 492.2 L809.7 488.0 L827.8 485.5 L844.8 484.6 L860.2 485.3 L873.7 487.4 L885.0 490.7 L893.8 495.2 L899.9 500.4 L903.2 506.2 L903.4 512.3 L900.7 518.3 L894.9 523.9 L886.2 528.9 L874.6 533.0 L860.4 535.9 L843.9 537.3 L825.2 537.0 L804.8 535.0 L783.0 531.1 L760.1 525.2 L736.7 517.3 L713.0 507.5 L689.6 495.8 L666.8 482.6 L645.0 467.8 L624.5 451.9 L605.8 435.0 L589.0 417.6 L574.5 399.9 L562.4 382.3 L552.9 365.2 L546.0 348.9 L541.7 333.9 L540.1 320.4 L541.1 308.7 L544.4 299.2 L550.0 292.1 L557.6 287.5 L566.9 285.5 L577.8 286.3 L589.8 289.8 L602.6 296.0 L616.0 304.7 L629.6 315.8 L643.2 329.1 L656.4 344.2 L668.9 360.9 L680.6 378.8 L691.3 397.5 L700.9 416.6 L709.1 435.6 L716.0 454.2 L721.6 471.8 L725.9 488.3 L728.9 503.0 L730.9 515.8 L731.8 526.4 L732.1 534.4 L731.7 539.8 L731.1 542.4 L730.3 542.1 L729.7 539.0 L729.4 533.0 L729.8 524.5 L731.0 513.5 L733.1 500.2 L736.4 485.1 L740.9 468.4 L746.8 450.5 L753.9 431.8 L762.5 412.7 L772.2 393.7 L783.1 375.2 L795.0 357.5 L807.7 341.1 L821.0 326.3 L834.6 313.4 L848.2 302.7 L861.5 294.5 L874.2 288.9 L886.0 285.9 L896.5 285.7 L905.6 288.2 L912.8 293.3 L917.9 300.9 L920.8 310.9 L921.3 322.9 L919.1 336.8 L914.4 352.1 L906.9 368.5 L896.9 385.8 L884.3 403.4 L869.3 421.1 L852.1 438.4 L833.0 455.1 L812.3 470.9 L790.2 485.3 L767.3 498.3 L743.8 509.6 L720.1 519.0 L696.7 526.5 L674.1 532.0 L652.5 535.6 L632.4 537.2 L614.1 537.1 L598.0 535.4 L584.4 532.3 L573.4 528.0 L565.2 522.9 L560.0 517.1 L557.9 511.1 L558.7 505.0 L562.6 499.3 L569.2 494.2 L578.6 490.0 L590.3 486.8 L604.2 485.0 L620.0 484.7 L637.2 485.9 L655.6 488.7 L674.6 493.2 L694.0 499.3 L713.4 506.8 L732.2 515.7 L750.2 525.8 L767.1 536.8 L782.4 548.3 L796.1 560.2 L807.7 572.1 L817.2 583.6 L824.4 594.4 L829.3 604.1 L831.9 612.5 L832.1 619.2 L830.2 623.8 L826.2 626.3 L820.4 626.3 L813.0 623.8 L804.2 618.6 L794.3 610.7 L783.7 600.1 L772.6 587.1 L761.4 571.6 L750.3 553.9 L739.7 534.2 L729.9 513.0 L721.0 490.5 L713.3 467.2 L707.0 443.4 L702.1 419.7 L698.8 396.4 L697.0 374.0 L696.8 352.9 L698.1 333.6 L700.8 316.4 L704.8 301.7 L709.7 289.8 L715.6 280.8 L722.0 275.1 L728.7 272.7 L735.5 273.7 L742.1 278.0 L748.2 285.6 L753.6 296.3 L758.1 310.0 L761.4 326.2 L763.3 344.9 L763.8 365.5 L762.8 387.6 L760.1 411.0 L755.8 435.0 L750.0 459.3 L742.7 483.4 L734.1 506.8 L724.4 529.3 L713.7 550.3 L702.5 569.5 L690.8 586.7 L679.1 601.6 L667.6 613.9 L656.7 623.6 L646.6 630.6 L637.7 634.9 L630.3 636.6 L624.5 635.7 L620.7 632.4 L619.0 626.9 L619.5 619.6 L622.3 610.6 L627.5 600.3 L634.9 589.0 L644.6 577.2 L656.4 565.1 L670.0 553.0 L685.3 541.4 L702.0 530.5 L719.7 520.5 L738.1 511.7 L756.8 504.3 L775.5 498.3 L793.6 494.0 L810.9 491.2 L827.0 490.1 L841.4 490.4 L853.9 492.1 L864.2 495.0 L871.9 498.8 L876.9 503.4 L879.1 508.5 L878.2 513.7 L874.4 518.8 L867.6 523.4 L857.9 527.3 L845.4 530.2 L830.4 531.8 L813.1 531.8 L793.8 530.2 L772.8 526.7 L750.6 521.2 L727.4 513.8 L703.7 504.4 L680.0 493.1 L656.6 479.9 L634.0 465.1 L612.5 448.9 L592.4 431.6 L574.2 413.3 L558.0 394.6 L544.2 375.6 L532.9 356.9 L524.1 338.7 L518.1 321.4 L514.8 305.4 L514.1 291.0 L516.0 278.6 L520.4 268.3 L527.0 260.5 L535.5 255.2 L545.9 252.6 L557.7 252.8 L570.6 255.7 L584.4 261.3 L598.7 269.4 L613.2 280.0 L627.6 292.6 L641.6 307.1 L655.0 323.1 L667.6 340.3 L679.1 358.1 L689.5 376.4 L698.6 394.5 L706.5 412.2 L713.0 428.9 L718.3 444.3 L722.3 458.1 L725.4 469.9 L727.5 479.4 L729.0 486.4 L729.9 490.8 L730.6 492.4 L731.3 491.2 L732.2 487.2 L733.5 480.5 L735.5 471.2 L738.3 459.6 L742.2 445.9 L747.2 430.4 L753.5 413.5 L761.1 395.6 L770.1 376.9 L780.4 358.1 L791.9 339.4 L804.6 321.4 L818.2 304.3 L832.5 288.7 L847.4 274.8 L862.5 262.9 L877.5 253.4 L892.2 246.4 L906.2 242.1 L919.2 240.5 L930.9 241.7 L941.0 245.7 L949.2 252.4 L955.2 261.6 L958.9 273.1 L960.1 286.7 L958.7 302.0 L954.6 318.9 L947.8 336.9 L938.4 355.6 L926.4 374.7 L912.0 393.8 L895.5 412.6 L877.0 430.7 L856.9 447.8 L835.5 463.6 L813.3 478.0 L790.5 490.6 L767.6 501.4 L745.0 510.3 L723.1 517.2 L702.4 522.2 L683.1 525.4 L665.7 526.9 L650.5 526.8 L637.7 525.3 L627.6 522.8 L620.2 519.5 L615.8 515.6 L614.4 511.5 L615.9 507.5 L620.3 503.9 L627.4 501.0 L637.1 498.9 L649.2 498.0 L663.2 498.5 L679.0 500.4 L696.1 503.9 L714.2 509.1 L732.9 515.8 L751.7 524.2 L770.4 533.9 L788.4 545.0 L805.5 557.1 L821.3 570.0 L835.5 583.5 L847.8 597.2 L858.1 610.8 L866.1 623.9 L871.8 636.2 L875.2 647.3 L876.1 657.0 L874.7 664.8 L871.1 670.6 L865.5 674.0 L858.0 674.9 L848.9 673.2 L838.4 668.8 L826.9 661.7 L814.7 651.8 L802.0 639.4 L789.2 624.5 L776.6 607.4 L764.6 588.4 L753.2 567.8 L742.9 546.0 L733.7 523.3 L725.9 500.3 L719.6 477.2 L714.8 454.6 L711.6 433.0 L709.9 412.7 L709.7 394.2 L710.9 377.8 L713.2 363.8 L716.5 352.7 L720.7 344.5 L725.3 339.5 L730.3 337.7 L735.2 339.3 L739.9 344.1 L744.1 352.1 L747.5 363.1 L749.9 377.0 L751.2 393.3 L751.1 411.9 L749.5 432.3 L746.4 454.1 L741.7 476.9 L735.5 500.3 L727.7 523.8 L718.5 546.9 L708.0 569.3 L696.5 590.5 L684.2 610.1 L671.3 627.9 L658.2 643.5 L645.0 656.6 L632.2 667.2 L620.1 675.1 L609.0 680.2 L599.1 682.6 L590.7 682.3 L584.2 679.4 L579.7 674.2 L577.3 666.8 L577.2 657.5 L579.5 646.6 L584.2 634.4 L591.3 621.4 L600.5 607.7 L611.9 593.9 L625.2 580.1 L640.1 566.8 L656.4 554.3 L673.7 542.7 L691.7 532.4 L710.0 523.4 L728.2 515.9 L745.9 510.0 L762.7 505.8 L778.3 503.0 L792.2 501.8 L804.2 501.9 L813.9 503.1 L821.1 505.3 L825.6 508.2 L827.2 511.4 L826.0 514.8 L821.8 518.0 L814.6 520.8 L804.7 522.7 L792.1 523.6 L777.0 523.1 L759.8 521.1 L740.6 517.4 L719.9 511.9 L698.1 504.4 L675.4 495.0 L652.4 483.6 L629.5 470.4 L607.0 455.4 L585.4 438.8 L565.0 420.9 L546.2 402.0 L529.3 382.3 L514.6 362.1 L502.3 342.0 L492.5 322.1 L485.4 302.8 L481.0 284.7 L479.4 267.9 L480.4 252.9 L484.0 239.8 L490.0 229.1 L498.2 220.9 L508.4 215.3 L520.3 212.5 L533.7 212.4 L548.1 215.2 L563.3 220.7 L579.0 228.8 L594.8 239.2 L610.5 251.8 L625.8 266.2 L640.4 282.0 L654.1 299.0 L666.8 316.8 L678.3 334.8 L688.5 352.7 L697.4 370.1 L705.0 386.5 L711.4 401.6 L716.6 415.0 L720.7 426.5 L724.0 435.6 L726.7 442.3 L728.8 446.4 L730.7 447.7" fill="none" stroke="#80b6e6" stroke-width="1.1" stroke-linejoin="round"/>
</svg>
<div class="pl" style="left:664px;top:141.5px;font-size:18px;line-height:22px">Butterfly Curve</div>
<div class="pl" style="left:404px;width:60px;text-align:right;top:166.8px">3.5</div>
<div class="pl" style="left:404px;width:60px;text-align:right;top:274.6px">2.4</div>
<div class="pl" style="left:404px;width:60px;text-align:right;top:382.4px">1.3</div>
<div class="pl" style="left:404px;width:60px;text-align:right;top:490.2px">0.2</div>
<div class="pl" style="left:404px;width:60px;text-align:right;top:598.0px">-0.9</div>
<div class="pl" style="left:404px;width:60px;text-align:right;top:705.8px">-2.0</div>
<div class="pl" style="left:452.5px;width:30px;text-align:center;top:715.5px">-3</div>
<div class="pl" style="left:628.0px;width:30px;text-align:center;top:715.5px">-1</div>
<div class="pl" style="left:803.5px;width:30px;text-align:center;top:715.5px">1</div>
<div class="pl" style="left:979.0px;width:30px;text-align:center;top:715.5px">3</div>
<div class="pl" style="left:712.6px;width:40px;text-align:center;top:729px;font-size:12.5px;line-height:16px">x</div>
<div class="pl" style="left:418.5px;width:40px;text-align:center;top:431px;font-size:12px;line-height:16px;transform:rotate(-90deg)">f(x)</div>

<!-- RIGHT DOCK -->
<div class="a" style="left:1058px;top:105px;width:322px;height:676px;background:#25292d"></div>
<div class="t" style="left:1061px;top:107.5px">xy-Equation</div>
<svg class="a" style="left:1350.4px;top:109px" width="7" height="7"><path d="M3.5 0.6L6.4 3.5 3.5 6.4 0.6 3.5z" fill="none" stroke="#e8e8e8" stroke-width="0.9"/></svg>
<div class="a" style="left:1363.7px;top:107px;width:11px;height:11px;border-radius:50%;background:#b3b3b3"></div>
<svg class="a" style="left:1365.7px;top:109px" width="7" height="7"><path d="M1 1l5 5M6 1L1 6" stroke="#2a2a2a" stroke-width="1.1"/></svg>
<div class="a" style="left:1059px;top:123px;width:319.5px;height:657px;background:#1b1e20;border:1.5px solid #3592c8;border-radius:3px"></div>
<div class="a" style="left:1064px;top:148px;width:308px;height:586px;background:#26292d;border:1px solid #40454a;border-radius:3px"></div>
<div class="a" style="left:1064.5px;top:129px;width:52.5px;height:21px;background:#26292d;border:1px solid #40454a;border-bottom:none;border-radius:3px 3px 0 0"></div>
<div class="a" style="left:1064.5px;top:129px;width:52.5px;height:2px;background:#3daee9;border-radius:2px 2px 0 0"></div>
<div class="t" style="left:1075px;top:133px">General</div>
<div class="t" style="left:1135.0px;top:133px">Line</div>
<div class="t" style="left:1180.0px;top:133px">Symbol</div>
<div class="t" style="left:1234.5px;top:133px">Values</div>
<div class="t" style="left:1287.5px;top:133px">Filling</div>
<div class="a" style="left:1168.0px;top:131px;width:1px;height:17px;background:#25282c"></div>
<div class="a" style="left:1220.5px;top:131px;width:1px;height:17px;background:#25282c"></div>
<div class="a" style="left:1272.5px;top:131px;width:1px;height:17px;background:#25282c"></div>
<div class="a" style="left:1325.5px;top:131px;width:1px;height:17px;background:#25282c"></div>
<div class="lbl" style="top:155.9px">Name:</div>
<div class="lbl" style="top:179.2px">Comment:</div>
<div class="lbl" style="top:229.4px">Type:</div>
<div class="lbl" style="top:303.7px">x=f(t)</div>
<div class="lbl" style="top:430.9px">y=f(t)</div>
<div class="lbl" style="top:504.8px">t, min</div>
<div class="lbl" style="top:526.9px">t, max</div>
<div class="lbl" style="top:549.7px">Points:</div>
<div class="lbl" style="top:571.8px">Plot range:</div>
<div class="lbl" style="top:211.1px;font-weight:bold">Equation</div>
<div class="fld" style="left:1139.5px;top:151.5px;width:229.0px;height:19.5px"></div>
<div class="t" style="left:1144px;top:155.9px">f(x)</div>
<div class="fld" style="left:1139.5px;top:174.5px;width:229.0px;height:21.0px"></div>
<div class="t" style="left:1142.7px;top:177.3px">http://mathworld.wolfram.com/ButterflyCurve.html</div>
<div class="fld" style="left:1139.5px;top:225.0px;width:229.0px;height:19.5px;background:#2f3338;border-color:#464a4f"></div>
<div class="t" style="left:1143.6px;top:229.4px">Parametric</div>
<svg class="a" style="left:1356px;top:232px" width="10" height="7"><path d="M1 1.5l4 4 4-4" fill="none" stroke="#eff0f1" stroke-width="1.1"/></svg>
<div class="fld" style="left:1139.5px;top:247.5px;width:208.0px;height:123.5px"></div>
<div class="t" style="left:1143px;top:251px"><span class="fn">sin</span>(<span class="tv">t</span>)*(<span class="fn">exp</span>(<span class="fn">cos</span>(<span class="tv">t</span>))-2*<span class="fn">cos</span>(4*<span class="tv">t</span>)-<span class="fn">pow</span>(<span class="fn">sin</span>(<span class="tv">t</span>/12), 5))</div>
<div class="fld" style="left:1139.5px;top:374.5px;width:208.0px;height:123.0px;border-color:#3daee9"></div>
<div class="t" style="left:1143px;top:378px"><span class="fn">cos</span>(<span class="tv">t</span>)*(<span class="fn">exp</span>(<span class="fn">cos</span>(<span class="tv">t</span>))-2*<span class="fn">cos</span>(4*<span class="tv">t</span>)-<span class="fn">pow</span>(<span class="fn">sin</span>(<span class="tv">t</span>/12),5))</div>
<div class="btn" style="left:1349.5px;top:247.5px;width:19px;height:19.5px"></div>
<div class="t" style="left:1349.5px;width:19px;text-align:center;top:253.0px;font-size:5px;line-height:8px">Aa</div>
<div class="btn" style="left:1349.5px;top:268.5px;width:19px;height:19.5px"></div>
<svg class="a" style="left:1354.5px;top:273.5px" width="9" height="9" viewBox="0 0 9 9"><path d="M0.5 2.2C1 1.2 1.8 0.9 3 0.9H8.5" fill="none" stroke="#f4f4f4" stroke-width="1.3"/><path d="M3.2 1.2C3.2 4 2.6 6.5 1.6 8.4" fill="none" stroke="#f4f4f4" stroke-width="1.4"/><path d="M6 1.2V6.8C6 7.8 6.6 8.2 7.6 7.6" fill="none" stroke="#f4f4f4" stroke-width="1.4"/></svg>
<div class="btn" style="left:1349.5px;top:374.0px;width:19px;height:19.5px"></div>
<div class="t" style="left:1349.5px;width:19px;text-align:center;top:379.5px;font-size:5px;line-height:8px">Aa</div>
<div class="btn" style="left:1349.5px;top:395.0px;width:19px;height:19.5px"></div>
<svg class="a" style="left:1354.5px;top:400.0px" width="9" height="9" viewBox="0 0 9 9"><path d="M0.5 2.2C1 1.2 1.8 0.9 3 0.9H8.5" fill="none" stroke="#f4f4f4" stroke-width="1.3"/><path d="M3.2 1.2C3.2 4 2.6 6.5 1.6 8.4" fill="none" stroke="#f4f4f4" stroke-width="1.4"/><path d="M6 1.2V6.8C6 7.8 6.6 8.2 7.6 7.6" fill="none" stroke="#f4f4f4" stroke-width="1.4"/></svg>
<div class="fld" style="left:1139.5px;top:500.5px;width:229.0px;height:20.0px"></div>
<div class="t" style="left:1143px;top:504.8px">0</div>
<div class="fld" style="left:1139.5px;top:522.5px;width:229.0px;height:20.0px"></div>
<div class="t" style="left:1143px;top:526.9px">10*<span class="fn">pi</span></div>
<div class="fld" style="left:1139.5px;top:545.0px;width:229.0px;height:20.0px;border-color:#4a4e53"></div>
<div class="t" style="left:1143px;top:549.7px">1000</div>
<svg class="a" style="left:1357px;top:548px" width="9" height="14"><path d="M1 4.5l3.5-3.5 3.5 3.5M1 9.5l3.5 3.5 3.5-3.5" fill="none" stroke="#eff0f1" stroke-width="1.1"/></svg>
<div class="fld" style="left:1139.5px;top:567.0px;width:229.0px;height:20.0px;background:#2e3237;border-color:#393d42"></div>
<div class="t dis" style="left:1143px;top:571.8px">1 : x = -3 .. 3, y = -2 .. 3,5</div>
<svg class="a" style="left:1356px;top:574px" width="10" height="7"><path d="M1 1.5l4 4 4-4" fill="none" stroke="#5f6368" stroke-width="1.1"/></svg>
<div class="a" style="left:1068px;top:589px;width:301px;height:2px;background:#3b3f44"></div>
<div class="btn" style="left:1300.5px;top:593px;width:68px;height:21px;background:#2e3236;border-color:#3a3e43"></div>
<svg class="a" style="left:1305px;top:598px" width="10" height="10"><circle cx="5" cy="5" r="3" fill="none" stroke="#8a8d90" stroke-width="1.2"/><circle cx="5" cy="5" r="1" fill="#8a8d90"/><path d="M5 0.5v1.5M5 8v1.5M0.5 5h1.5M8 5h1.5M1.8 1.8l1 1M7.2 7.2l1 1M8.2 1.8l-1 1M2.8 7.2l-1 1" stroke="#8a8d90"/></svg>
<div class="t dis" style="left:1318px;top:597.7px">Recalculate</div>
<div class="a" style="left:1069px;top:719px;width:11px;height:11px;background:#1f4b66;border:1.5px solid #3daee9;border-radius:2px"></div>
<svg class="a" style="left:1070px;top:720px" width="9" height="9"><path d="M1.5 4.5l2 2 4-4.5" fill="none" stroke="#fcfcfc" stroke-width="1.4"/></svg>
<div class="t" style="left:1083.5px;top:718.6px">Visible</div>
<div class="btn" style="left:1299px;top:743px;width:23.5px;height:24px;background:#2e3236;border-color:#3c4045"></div>
<div class="btn" style="left:1324px;top:743px;width:23.5px;height:24px;background:#2e3236;border-color:#3c4045"></div>
<div class="btn" style="left:1349px;top:743px;width:23.5px;height:24px;background:#2e3236;border-color:#3c4045"></div>
<svg class="a" style="left:1305.5px;top:749.5px" width="11" height="11" viewBox="0 0 12 12"><path d="M1.5 0.5h5.5l3.5 3.5v7h-9z" fill="none" stroke="#b8b9ba"/><path d="M7 0.5v3.5h3.5" fill="#b8b9ba"/><rect x="5" y="7.5" width="5.5" height="3.5" fill="none" stroke="#b8b9ba"/></svg>
<svg class="a" style="left:1330.0px;top:749.5px" width="11" height="11" viewBox="0 0 12 12"><path d="M0.5 0.5h9l2 2v9h-11z" fill="none" stroke="#f0f0f0"/><rect x="3" y="0.5" width="5" height="3" fill="none" stroke="#f0f0f0"/><rect x="2.5" y="6.5" width="7" height="5" fill="none" stroke="#f0f0f0"/></svg>
<svg class="a" style="left:1354.5px;top:749.5px" width="12" height="12" viewBox="0 0 12 12"><path d="M0.5 0.5h9l2 2v3M7 11.5H0.5v-11" fill="none" stroke="#f0f0f0"/><rect x="3" y="0.5" width="5" height="3" fill="none" stroke="#f0f0f0"/><path d="M2.5 11.5v-5h5" fill="none" stroke="#f0f0f0"/><path d="M6.5 11.5l5-5" stroke="#f0f0f0" stroke-width="1.8"/></svg>


<!-- STATUS BAR -->
<div class="t" style="left:1236px;top:783px;letter-spacing:-0.12px">Memory used 326 MB, peak 326 MB</div>
</body></html>
